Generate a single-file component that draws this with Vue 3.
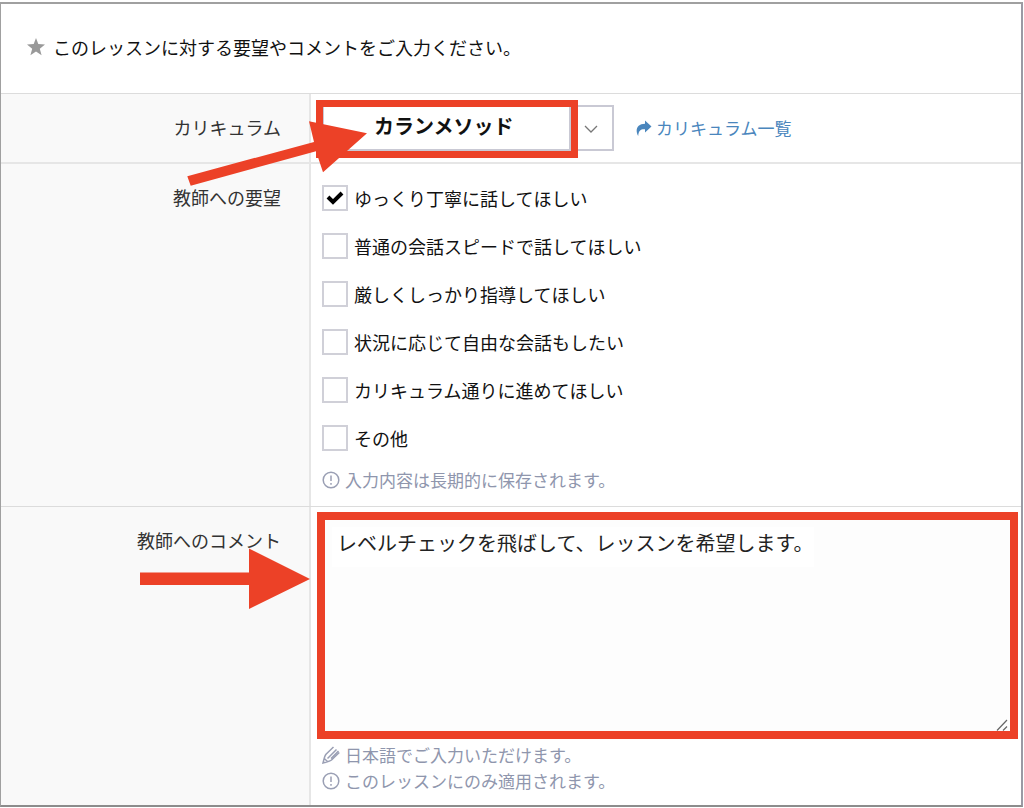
<script setup>
import { ref } from 'vue'

const curriculum = ref('callan')
const requests = ref([
  { id: 'slow', label: 'ゆっくり丁寧に話してほしい', checked: true },
  { id: 'normal', label: '普通の会話スピードで話してほしい', checked: false },
  { id: 'strict', label: '厳しくしっかり指導してほしい', checked: false },
  { id: 'free', label: '状況に応じて自由な会話もしたい', checked: false },
  { id: 'plan', label: 'カリキュラム通りに進めてほしい', checked: false },
  { id: 'other', label: 'その他', checked: false }
])
const comment = ref('レベルチェックを飛ばして、レッスンを希望します。')
</script>

<template>
  <main class="panel">
    <header class="head">
      <svg class="star" viewBox="0 0 18 18" aria-hidden="true">
        <path d="M9 0l2.3 6.1 6.7.4-5.200 4.200 1.800 6.600L9 13.600l-5.600 3.700 1.800-6.600L0 6.500l6.700-.4z" />
      </svg>
      <h1>このレッスンに対する要望やコメントをご入力ください。</h1>
    </header>

    <section class="row row-curriculum">
      <label class="name" for="curriculum">カリキュラム</label>
      <div class="field inline">
        <div class="picker">
          <select id="curriculum" v-model="curriculum">
            <option value="callan">カランメソッド</option>
          </select>
          <svg class="chevron" viewBox="0 0 14 8" aria-hidden="true"><path d="M1 1l6 6 6-6" /></svg>
          <span class="marker"></span>
        </div>
        <a class="list-link" href="#curriculum">
          <svg viewBox="0 0 16 16" aria-hidden="true">
            <path d="M9 0.500l6.500 6L9 12.500V9.200C5 8.900 2.600 10 2.200 16C-1.200 10 1 4 9 3.800z" />
          </svg>
          <span>カリキュラム一覧</span>
        </a>
      </div>
    </section>

    <section class="row">
      <h2 class="name">教師への要望</h2>
      <div class="field requests">
        <div class="options">
          <label v-for="item in requests" :key="item.id" class="option">
            <input v-model="item.checked" type="checkbox" />
            <svg class="tick" viewBox="0 0 18 16" aria-hidden="true"><path d="M2 7l5 5 9-9" /></svg>
            <span>{{ item.label }}</span>
          </label>
        </div>
        <p class="hint">
          <svg viewBox="0 0 18 18" aria-hidden="true">
            <circle cx="9" cy="9" r="7.800" /><path d="M9 4.500v5.500M9 12v1.800" />
          </svg>
          <span>入力内容は長期的に保存されます。</span>
        </p>
      </div>
    </section>

    <section class="row row-comment">
      <label class="name" for="comment">教師へのコメント</label>
      <div class="field comment">
        <div class="editor">
          <textarea id="comment" v-model="comment" spellcheck="false"></textarea>
          <svg class="grip" viewBox="0 0 12 12" aria-hidden="true"><path d="M1 11.500L11 1M7 11.500l4-4" /></svg>
        </div>
        <p class="hint">
          <svg viewBox="0 0 18 18" aria-hidden="true">
            <path d="M11.500 1L4 8.200C2.500 10 2 13 1 17c4-1 7-1.500 8.800-3.200L17.300 6.500M5.500 12.500L14.500 3.500M9 12.500L16.500 5M2.300 12.500l3.200 3" />
          </svg>
          <span>日本語でご入力いただけます。</span>
        </p>
        <p class="hint">
          <svg viewBox="0 0 18 18" aria-hidden="true">
            <circle cx="9" cy="9" r="7.800" /><path d="M9 4.500v5.500M9 12v1.800" />
          </svg>
          <span>このレッスンにのみ適用されます。</span>
        </p>
      </div>
    </section>

    <!-- Guide arrows laid over the form -->
    <svg class="arrow arrow-top" viewBox="0 0 180 52" aria-hidden="true">
      <path d="M0.300 55.200L127 20.900 122 0.300 180 12.300 136 51.300 129 30.200 3.700 64.700z" />
    </svg>
    <svg class="arrow arrow-bottom" viewBox="0 0 170 61" aria-hidden="true">
      <path d="M0 24.500h109V0.500L170 31 109 61V37H0z" />
    </svg>
  </main>
</template>

<style>
body {
  margin: 0;
  background: #fff;
}
</style>

<style scoped>
.panel {
  position: relative;
  box-sizing: border-box;
  margin: 2px 1px 0 0;
  border: 1px solid #a0a0a0;
  border-width: 2px 2px 2px 1px;
  border-right-color: #9a9aa4;
  border-bottom-color: #8c8c8c;
  background: #fff;
  color: #111;
  font-family: "Noto Sans CJK JP", "Liberation Sans", sans-serif;
  font-size: 18px;
  line-height: 26px;
}
.head {
  display: flex;
  box-sizing: border-box;
  align-items: center;
  gap: 8px;
  height: 90px;
  padding: 0 0 4px 26px;
  border-bottom: 1px solid #dcdcdc;
}
.star {
  width: 18px;
  height: 18px;
  fill: #999;
}
h1 {
  margin: 0;
  font-size: 18px;
  font-weight: 400;
}
.row {
  display: grid;
  grid-template-columns: 310px minmax(0, 1fr);
  border-bottom: 1px solid #dcdcdc;
}
.row-curriculum {
  border-bottom: 2px solid #e6e6e6;
}
.row-comment {
  border-bottom: 0;
}
.name {
  box-sizing: border-box;
  margin: 0;
  padding: 20px 28px 0 0;
  border-right: 2px solid #e6e6e6;
  background: #f9f9f9;
  color: #333;
  font-size: 18px;
  font-weight: 400;
  text-align: right;
}
.inline {
  display: flex;
  align-items: center;
  gap: 22px;
  height: 68px;
  padding-left: 11px;
}
.picker {
  position: relative;
  width: 292px;
}
select {
  display: block;
  box-sizing: border-box;
  width: 100%;
  height: 46px;
  margin: 0;
  padding: 0 0 6px 50px;
  border: 2px solid #c9c9d4;
  border-radius: 0;
  outline: 0;
  appearance: none;
  background: #fff;
  color: #111;
  font-family: inherit;
  font-size: 20px;
  font-weight: 700;
}
.chevron {
  position: absolute;
  top: 20px;
  right: 16px;
  width: 14px;
  height: 8px;
  fill: none;
  stroke: #777;
  stroke-width: 1.300;
  pointer-events: none;
}
.marker {
  position: absolute;
  top: -5px;
  left: -6px;
  box-sizing: border-box;
  width: 262px;
  height: 58px;
  border: 7px solid #ec4127;
  box-shadow: inset -2px 0 #c9c9d4;
  pointer-events: none;
}
.list-link {
  display: flex;
  align-items: center;
  gap: 4px;
  color: #4a86bd;
  font-size: 17px;
  text-decoration: none;
}
.list-link svg {
  width: 16px;
  height: 16px;
  fill: #4a86bd;
}
.requests {
  padding: 21px 11px 12px;
}
.options {
  display: flex;
  flex-direction: column;
  align-items: flex-start;
  gap: 22px;
  margin-bottom: 16px;
}
.option {
  display: flex;
  position: relative;
  gap: 6px;
  height: 26px;
}
input {
  box-sizing: border-box;
  width: 26px;
  height: 26px;
  margin: 0;
  border: 2px solid #d0d0d8;
  appearance: none;
  background: #fff;
}
.tick {
  display: none;
  position: absolute;
  top: 5px;
  left: 4px;
  width: 18px;
  height: 16px;
  fill: none;
  stroke: #000;
  stroke-width: 4;
  pointer-events: none;
}
input:checked + .tick {
  display: block;
}
.hint {
  display: flex;
  align-items: center;
  gap: 5px;
  margin: 0;
  color: #8f96ad;
  font-size: 17px;
}
.hint svg {
  width: 18px;
  height: 18px;
  fill: none;
  stroke: #9a9fb4;
  stroke-width: 1.500;
}
.requests .hint {
  padding-bottom: 1px;
}
.comment {
  padding: 5px 3px 11px 6px;
}
.comment .hint {
  padding-left: 5px;
}
.editor {
  position: relative;
  margin-bottom: 3px;
}
textarea {
  display: block;
  box-sizing: border-box;
  width: 100%;
  height: 227px;
  margin: 0;
  padding: 9px 12px;
  border: 8px solid #ec4127;
  border-radius: 0;
  outline: 0;
  background: linear-gradient(#fff, #fff) 7px 7px / 482px 40px no-repeat #fdfdfd;
  color: #222;
  font-family: inherit;
  font-size: 20px;
  line-height: 28px;
  resize: vertical;
}
textarea::-webkit-resizer {
  background: transparent;
}
.grip {
  position: absolute;
  right: 10px;
  bottom: 8px;
  width: 12px;
  height: 12px;
  fill: none;
  stroke: #666;
  stroke-width: 1.200;
  pointer-events: none;
}
.arrow {
  position: absolute;
  overflow: visible;
  fill: #ec4127;
  pointer-events: none;
}
.arrow-top {
  top: 117px;
  left: 186px;
  width: 180px;
  height: 52px;
}
.arrow-bottom {
  top: 544px;
  left: 139px;
  width: 170px;
  height: 61px;
}
</style>
